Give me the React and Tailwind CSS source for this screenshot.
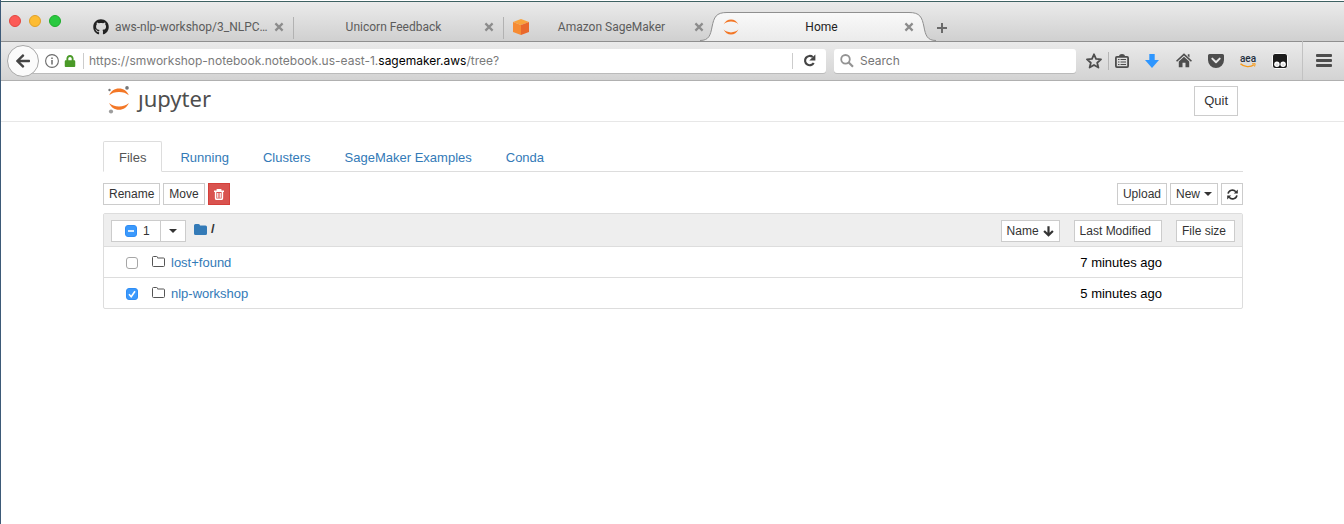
// App.jsx
import React, { useEffect, useRef, useState } from "react";
import { FaGithub, FaLock, FaArrowLeft } from "react-icons/fa";

const files = [
  { name: "lost+found", modified: "7 minutes ago" },
  { name: "nlp-workshop", modified: "5 minutes ago" },
];

const navTabs = ["Files", "Running", "Clusters", "SageMaker Examples", "Conda"];

const btn =
  "flex items-center justify-center h-[22px] border border-[#ccc] bg-white text-xs leading-4 text-[#333] whitespace-nowrap";

/* ---------- icons ---------- */

function CloseIcon() {
  return (
    <svg width="10" height="10" viewBox="0 0 10 10" stroke="#8c8c8c" strokeWidth="2.2">
      <path d="M1.4 1.4 8.6 8.6M8.6 1.4 1.4 8.6" />
    </svg>
  );
}

function CubeIcon() {
  return (
    <svg width="16" height="16" viewBox="0 0 16 16">
      <path d="M8 0 16 3 8 6 0 3Z" fill="#f9a33c" />
      <path d="M0 3 8 6V16L0 13Z" fill="#f68b33" />
      <path d="M16 3 8 6V16L16 13Z" fill="#e9682c" />
    </svg>
  );
}

function JupyterTabIcon() {
  return (
    <svg width="16" height="16" viewBox="0 0 16 16" fill="#f37726">
      <path d="M.6 5.4C2 2.3 4.8.4 8 .4s6 1.900 7.400 5C13.600 3.600 11 2.600 8 2.600S2.400 3.600.6 5.400Z" />
      <path d="M.6 10.600C2 13.700 4.800 15.600 8 15.600s6-1.900 7.400-5C13.600 12.400 11 13.400 8 13.400s-5.600-1-7.400-2.800Z" />
    </svg>
  );
}

function JupyterLogo() {
  return (
    <svg width="24" height="28" viewBox="0 0 24 28">
      <path d="M1.200 9.300C2.800 5.100 6.500 2.500 11 2.500s8.200 2.600 9.800 6.800C18.500 7 15 5.900 11 5.900S3.500 7 1.200 9.300Z" fill="#f37726" />
      <path d="M1.200 17C2.800 21.200 6.500 23.800 11 23.800s8.200-2.600 9.800-6.800C18.500 19.300 15 20.400 11 20.400S3.500 19.300 1.200 17Z" fill="#f37726" />
      <circle cx="19" cy="1.900" r="1.800" fill="#767677" />
      <circle cx="1.500" cy="4" r="1.200" fill="#767677" />
      <circle cx="3" cy="25.500" r="2.100" fill="#9e9e9e" />
    </svg>
  );
}

function InfoIcon() {
  return (
    <svg width="14" height="14" viewBox="0 0 14 14" fill="none" stroke="#6b6b6b">
      <circle cx="7" cy="7" r="6.400" strokeWidth="1.100" />
      <path d="M7 6v4.600M7 3.400v1.500" strokeWidth="1.500" />
    </svg>
  );
}

function ReloadIcon() {
  return (
    <svg width="13" height="13" viewBox="0 0 12 12">
      <path d="M9 2.800A4.300 4.300 0 1 0 9.900 8.300" fill="none" stroke="#444" strokeWidth="2" />
      <path d="M11.400.4V6H5.800Z" fill="#444" />
    </svg>
  );
}

function SearchIcon() {
  return (
    <svg width="14" height="14" viewBox="0 0 14 14" fill="none" stroke="#939393">
      <circle cx="5.500" cy="5.300" r="4.300" strokeWidth="1.800" />
      <path d="M8.700 8.500 13 12.800" strokeWidth="2.200" />
    </svg>
  );
}

function StarIcon() {
  return (
    <svg width="16" height="16" viewBox="0 0 16 16" fill="none" stroke="#4d4d4d" strokeWidth="1.800" strokeLinejoin="round">
      <path d="M8 1.300 10 5.900 15 6.400 11.200 9.700 12.400 14.600 8 12 3.600 14.600 4.800 9.700 1 6.400 6 5.900Z" />
    </svg>
  );
}

function ClipboardIcon() {
  return (
    <svg width="16" height="16" viewBox="0 0 16 16" fill="none" stroke="#4d4d4d">
      <rect x="1.900" y="3.900" width="12.200" height="10.200" rx="1" strokeWidth="1.800" />
      <path d="M5 3.500C5 1.700 6.500 1 8 1s3 .7 3 2.500Z" fill="#4d4d4d" stroke="none" />
      <path d="M4 6.500h1.500M4 9h1.500M4 11.500h1.500M6.500 6.500h5.500M6.500 9h5.500M6.500 11.500h5.500" strokeWidth="1.200" />
    </svg>
  );
}

function DownloadIcon() {
  return (
    <svg width="14" height="14" viewBox="0 0 14 14" fill="#2e96ff">
      <path d="M4.300 0h5.400v6H14L7 14 0 6h4.300Z" />
    </svg>
  );
}

function HomeIcon() {
  return (
    <svg width="16" height="15" viewBox="0 0 16 15" fill="#4d4d4d">
      <path d="M8 .3 16 7.800l-1.100 1L8 2.400 1.100 8.800 0 7.800Z" />
      <path d="M8 3.700 13.200 8.500V14.300H9.500V9.800h-3v4.500H2.800V8.500Z" />
      <path d="M11.800 1.300h1.700v3.200l-1.700-1.600Z" />
    </svg>
  );
}

function PocketIcon() {
  return (
    <svg width="16" height="14" viewBox="0 0 16 14">
      <path d="M1.500 0h13A1.500 1.500 0 0 1 16 1.500V6A8 8 0 0 1 0 6V1.500A1.500 1.500 0 0 1 1.500 0Z" fill="#4d4d4d" />
      <path d="M4.300 4.600 8 8.200l3.700-3.600" fill="none" stroke="#e6e6e6" strokeWidth="2" strokeLinecap="round" strokeLinejoin="round" />
    </svg>
  );
}

function SmileIcon() {
  return (
    <svg width="16" height="5" viewBox="0 0 16 5" fill="none" stroke="#f79b1c">
      <path d="M.5.8C4 4.200 10.500 4.500 14 1.800" strokeWidth="1.400" />
      <path d="M12 .8 15.200.7 14.600 3.600" strokeWidth="1" />
    </svg>
  );
}

function MonkeyIcon() {
  return (
    <svg width="16" height="16" viewBox="0 0 16 16">
      <rect x=".5" y=".5" width="15" height="15" rx="2.500" fill="#1b1b1b" stroke="#fafafa" />
      <circle cx="4.900" cy="11.200" r="2.700" fill="#fff" />
      <circle cx="11.100" cy="11.200" r="2.700" fill="#fff" />
      <circle cx="4.900" cy="11.600" r="1.400" fill="#ddd" />
      <circle cx="11.100" cy="11.600" r="1.400" fill="#ddd" />
    </svg>
  );
}

function MenuIcon() {
  return (
    <svg width="16" height="13" viewBox="0 0 16 13" fill="#4d4d4d">
      <rect width="16" height="3" rx="1" />
      <rect y="5" width="16" height="3" rx="1" />
      <rect y="10" width="16" height="3" rx="1" />
    </svg>
  );
}

function TrashIcon() {
  return (
    <svg width="10" height="11" viewBox="0 0 10 11" fill="none" stroke="#fff">
      <path d="M0 2.300h10M3.300 2V.8h3.400V2" strokeWidth="1.400" />
      <path d="M1.600 2.500V9.300c0 .7.400 1 1 1h4.800c.6 0 1-.3 1-1V2.500" strokeWidth="1.500" />
      <path d="M3.500 4v4.800M5 4v4.800M6.500 4v4.800" strokeWidth=".8" />
    </svg>
  );
}

function RefreshIcon() {
  return (
    <svg width="11" height="11" viewBox="0 0 11 11">
      <path d="M1.100 4.700A4.400 4.400 0 0 1 8.800 2.700M9.900 6.300A4.400 4.400 0 0 1 2.200 8.300" fill="none" stroke="#333" strokeWidth="1.600" />
      <path d="M10.800.5V4.500H6.800ZM.2 10.500V6.500h4Z" fill="#333" />
    </svg>
  );
}

function Caret() {
  return (
    <svg width="8" height="4" viewBox="0 0 8 4" fill="#333">
      <path d="M0 0h8L4 4Z" />
    </svg>
  );
}

function SortArrow() {
  return (
    <svg width="11" height="11" viewBox="0 0 11 11" fill="none" stroke="#333" strokeWidth="2.200">
      <path d="M5.500.3v8.500M1.100 5 5.500 9.300 9.900 5" />
    </svg>
  );
}

function FolderSolid() {
  return (
    <svg width="13" height="11" viewBox="0 0 13 11" fill="#337ab7">
      <path d="M1.500 0h3A1.500 1.500 0 0 1 6 1.500h5.500A1.500 1.500 0 0 1 13 3v6.500a1.500 1.500 0 0 1-1.500 1.500h-10A1.500 1.500 0 0 1 0 9.500v-8A1.500 1.500 0 0 1 1.500 0Z" />
    </svg>
  );
}

function FolderOutline() {
  return (
    <svg width="13" height="11" viewBox="0 0 13 11" fill="none" stroke="#555">
      <path d="M1.500.5h3a1 1 0 0 1 1 1V2h6a1 1 0 0 1 1 1v6.500a1 1 0 0 1-1 1h-10a1 1 0 0 1-1-1v-8a1 1 0 0 1 1-1Z" />
    </svg>
  );
}

/* ---------- pieces ---------- */

function Check({ label, checked, indeterminate = false, onChange }) {
  const ref = useRef();

  useEffect(() => {
    ref.current.indeterminate = indeterminate;
  }, [indeterminate]);

  return (
    <span className="grid size-3 shrink-0">
      <input
        ref={ref}
        type="checkbox"
        aria-label={label}
        checked={checked}
        onChange={onChange}
        className="col-start-1 row-start-1 size-3 appearance-none rounded-[3px] border border-[#a6a6a6] bg-white checked:border-[#2f8df5] checked:bg-[#3b99fc] indeterminate:border-[#2f8df5] indeterminate:bg-[#3b99fc]"
      />
      {(checked || indeterminate) && (
        <svg
          viewBox="0 0 12 12"
          className="col-start-1 row-start-1 size-3 pointer-events-none"
          fill="none"
          stroke="#fff"
          strokeWidth="1.600"
        >
          <path d={indeterminate ? "M3 6h6" : "M3 6.300 5.200 8.700 9 3.200"} />
        </svg>
      )}
    </span>
  );
}

function BrowserTab({ title, icon, active }) {
  return (
    <div className="relative w-[210px] h-full">
      {active && (
        <svg width="236" height="29" viewBox="0 0 236 29" className="absolute -left-[13px] bottom-0">
          <defs>
            <linearGradient id="tabFill" x1="0" y1="0" x2="0" y2="1">
              <stop offset="0" stopColor="#f9f9f9" />
              <stop offset="1" stopColor="#ebebeb" />
            </linearGradient>
          </defs>
          <path
            d="M0 29V28.500C9 28.500 10.500 23 12 15 14 5 16 .5 27 .5H209C220 .5 222 5 224 15 225.500 23 227 28.500 236 28.500V29Z"
            fill="url(#tabFill)"
          />
          <path
            d="M0 28.500C9 28.500 10.500 23 12 15 14 5 16 .5 27 .5H209C220 .5 222 5 224 15 225.500 23 227 28.500 236 28.500"
            fill="none"
            stroke="#8f8f8f"
          />
        </svg>
      )}
      <div className="relative flex items-center h-full pt-3 pl-2.5 pr-[9px]">
        {icon}
        <button
          className={`flex-1 min-w-0 px-1.5 truncate text-center text-xs leading-4 ${
            active ? "text-[#222]" : "text-[#5c5c5c]"
          }`}
        >
          {title}
        </button>
        <button aria-label="Close tab">
          <CloseIcon />
        </button>
      </div>
    </div>
  );
}

function TabDivider() {
  return <div className="-mr-px mt-4 w-px h-[22px] bg-[#b2b2b2]" />;
}

function TabStrip() {
  return (
    <div className="flex h-10 box-content border-t border-[#3f6263] -mb-px bg-linear-to-b from-[#ebebeb] to-[#cfcfcf]">
      <div className="flex flex-1 -mt-px border-b border-[#8f8f8f] [&>*]:-mb-px">
        <div className="flex gap-2 w-[82px] pl-2 pt-3.5">
          <span className="size-3 rounded-full bg-[#fc5b57] border border-[#e2463f]" />
          <span className="size-3 rounded-full bg-[#fdbc33] border border-[#e0a028]" />
          <span className="size-3 rounded-full bg-[#29c940] border border-[#1dad2b]" />
        </div>
        <BrowserTab title="aws-nlp-workshop/3_NLPC..." icon={<FaGithub className="size-4 shrink-0 text-[#222]" />} />
        <TabDivider />
        <BrowserTab title="Unicorn Feedback" />
        <TabDivider />
        <BrowserTab title="Amazon SageMaker" icon={<CubeIcon />} />
        <BrowserTab title="Home" icon={<JupyterTabIcon />} active />
        <button aria-label="New tab" className="pt-3 pl-3.5">
          <svg width="10" height="10" viewBox="0 0 10 10" stroke="#6a6a6a" strokeWidth="2">
            <path d="M5 0v10M0 5h10" />
          </svg>
        </button>
      </div>
    </div>
  );
}

function AddressBar() {
  const [url, setUrl] = useState(
    "https://smworkshop-notebook.notebook.us-east-1.sagemaker.aws/tree?"
  );
  const [, before, domain, after] = url.match(/^(.*?)(sagemaker\.aws|$)(.*)$/);

  return (
    <div className="flex items-center h-10 pl-1.5 border-b border-[#b0b0b0] bg-linear-to-b from-[#ebebeb] to-[#d3d3d3]">
      <button
        aria-label="Back"
        className="relative flex items-center justify-center size-8 shrink-0 rounded-full border border-[#a8a8a8] bg-[#fbfbfb]"
      >
        <FaArrowLeft className="size-4 text-[#444]" />
      </button>
      <div className="flex items-center flex-1 h-6 -ml-3 pl-[18px] rounded-[3px] bg-white shadow-[0_1px_0_#bbb]">
        <InfoIcon />
        <FaLock className="ml-[5px] size-3 text-[#4a9a28]" />
        <span className="ml-[7px] w-px h-4 bg-[#ccc]" />
        <div className="grid flex-1 ml-[5px] font-[Inter,sans-serif] text-xs leading-4">
          <div aria-hidden="true" className="col-start-1 row-start-1 whitespace-pre text-[#7a7a7a]">
            {before}
            <span className="text-black">{domain}</span>
            {after}
          </div>
          <input
            aria-label="Address"
            value={url}
            onChange={(e) => setUrl(e.target.value)}
            className="col-start-1 row-start-1 outline-none bg-transparent text-transparent caret-black"
          />
        </div>
        <button aria-label="Reload" className="flex items-center h-4 px-2.5 border-l border-[#ccc]">
          <ReloadIcon />
        </button>
      </div>
      <label className="flex items-center gap-1.5 w-[242px] h-6 ml-2 px-1.5 rounded-[3px] bg-white shadow-[0_1px_0_#bbb]">
        <SearchIcon />
        <input
          aria-label="Search"
          placeholder="Search"
          className="flex-1 min-w-0 outline-none font-[Inter,sans-serif] text-xs leading-4 placeholder:text-[#757575]"
        />
      </label>
      <button aria-label="Bookmark" className="ml-2.5">
        <StarIcon />
      </button>
      <span className="ml-1.5 w-px h-[18px] bg-[#b5b5b5]" />
      <button aria-label="Bookmarks list" className="ml-[5px]">
        <ClipboardIcon />
      </button>
      <div className="flex items-center gap-4 ml-3.5">
        <button aria-label="Downloads" className="px-px"><DownloadIcon /></button>
        <button aria-label="Home page"><HomeIcon /></button>
        <button aria-label="Pocket"><PocketIcon /></button>
        <button className="flex flex-col items-center w-4 pt-0.5 text-[10px] leading-2 font-medium text-[#232f3e]">
          aea
          <SmileIcon />
        </button>
        <button aria-label="Scripts"><MonkeyIcon /></button>
      </div>
      <button aria-label="Menu" className="flex items-center h-full ml-3.5 pl-[13px] pr-3 border-l border-[#c2c2c2]">
        <MenuIcon />
      </button>
    </div>
  );
}

function FileTable() {
  const [selected, setSelected] = useState(["nlp-workshop"]);
  const all = selected.length === files.length;

  const toggle = (name) =>
    setSelected((s) => (s.includes(name) ? s.filter((n) => n !== name) : [...s, name]));

  return (
    <div className="mt-2 border border-[#ddd] rounded-[2px]">
      <table className="w-full text-[13px] leading-5">
        <thead>
          <tr className="bg-[#eee] border-b border-[#ddd]">
            <th className="w-full pt-1.5 pb-1 pl-[7px] font-normal">
              <div className="flex items-center">
                <div className="flex items-center h-[22px] border border-[#ccc] bg-white text-xs text-[#333]">
                  <label className="flex items-center gap-1.5 w-12 pl-[13px]">
                    <Check
                      label="Select all"
                      checked={all}
                      indeterminate={selected.length > 0 && !all}
                      onChange={() => setSelected(all ? [] : files.map((f) => f.name))}
                    />
                    {selected.length}
                  </label>
                  <button aria-label="Select by type" className="flex items-center h-full px-2 border-l border-[#ccc]">
                    <Caret />
                  </button>
                </div>
                <a href="#root" aria-label="Root folder" className="ml-2 -mt-1"><FolderSolid /></a>
                <a href="#root" className="ml-1 -mt-1 text-[#333] font-bold">/</a>
                <button className={`${btn} gap-1 px-[5px] ml-auto`}>
                  Name <SortArrow />
                </button>
              </div>
            </th>
            <th className="pt-1.5 pb-1 pl-3.5 font-normal">
              <button className={`${btn} pl-[5px] pr-2.5`}>Last Modified</button>
            </th>
            <th className="pt-1.5 pb-1 pl-3.5 pr-[7px] font-normal">
              <button className={`${btn} pl-[5px] pr-2`}>File size</button>
            </th>
          </tr>
        </thead>
        <tbody>
          {files.map((f) => (
            <tr key={f.name} className="border-b border-[#ddd] last:border-b-0">
              <td className="pt-[7px] pb-[5px] pl-[22px]">
                <div className="flex items-center h-[18px]">
                  <Check
                    label={`Select ${f.name}`}
                    checked={selected.includes(f.name)}
                    onChange={() => toggle(f.name)}
                  />
                  <span className="ml-3.5 -mt-1"><FolderOutline /></span>
                  <a href={`#${f.name}`} className="ml-1.5 text-[#337ab7]">{f.name}</a>
                </div>
              </td>
              <td className="pt-px text-right whitespace-nowrap text-black">{f.modified}</td>
              <td />
            </tr>
          ))}
        </tbody>
      </table>
    </div>
  );
}

export default function App() {
  const [tab, setTab] = useState("Files");

  return (
    <div className="min-h-screen pt-px bg-white border-l border-[#3d5a78]">
      {/* Browser chrome */}
      <div className="font-[Roboto,sans-serif]">
        <TabStrip />
        <AddressBar />
      </div>

      {/* Notebook page */}
      <div className="font-['Liberation_Sans',Arial,sans-serif]">
        <header className="pl-px border-b border-[#e7e7e7]">
          <div className="flex items-start justify-between max-w-[1140px] h-10 mx-auto px-[5px] pt-[5px]">
            <a href="#home" aria-label="Jupyter" className="flex items-start gap-1.5 text-[#4e4e4e]">
              <JupyterLogo />
              <span className="font-['Noto_Sans',sans-serif] text-[22px] leading-6">ȷupyter</span>
            </a>
            <button className="h-[30px] px-[9px] border border-[#ccc] bg-white text-[13px] leading-5 text-[#333]">
              Quit
            </button>
          </div>
        </header>

        <div className="pl-px">
          <main className="max-w-[1140px] mx-auto pt-[19px]">
            <nav className="flex gap-0.5 border-b border-[#ddd] text-[13px] leading-5">
              {navTabs.map((t) => (
                <button
                  key={t}
                  onClick={() => setTab(t)}
                  className={`-mb-px h-[31px] px-[15px] pt-[3px] border rounded-t-[2px] ${
                    t === tab
                      ? "border-[#ddd] border-b-white bg-white text-[#555]"
                      : "border-transparent text-[#337ab7]"
                  }`}
                >
                  {t}
                </button>
              ))}
            </nav>

            <div className="flex items-center gap-[3px] mt-[11px]">
              <button className={`${btn} px-[5px]`}>Rename</button>
              <button className={`${btn} px-[5px]`}>Move</button>
              <button
                aria-label="Delete"
                className="flex items-center justify-center size-[22px] border border-[#d43f3a] bg-[#d9534f]"
              >
                <TrashIcon />
              </button>
              <button className={`${btn} px-[5px] ml-auto`}>Upload</button>
              <button className={`${btn} gap-1 px-[5px]`}>
                New <Caret />
              </button>
              <button aria-label="Refresh" className={`${btn} w-[22px]`}>
                <RefreshIcon />
              </button>
            </div>

            <FileTable />
          </main>
        </div>
      </div>
    </div>
  );
}
